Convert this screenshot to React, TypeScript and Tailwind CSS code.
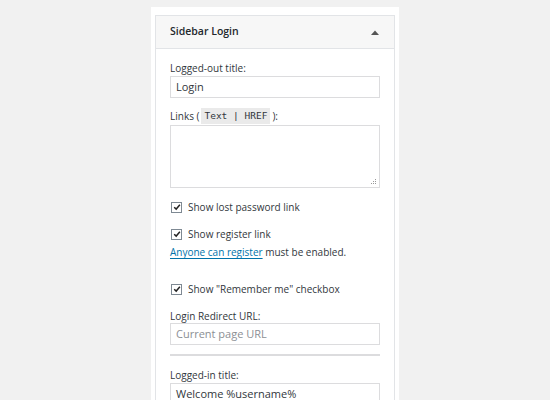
import React from "react";

function Check({ label }: { label: string }) {
  return (
    <label className="flex items-center h-[14px] leading-[14px]">
      <span className="ml-[1px] flex h-[11px] w-[11px] items-center justify-center border border-[#7e8993] bg-white">
        <svg viewBox="0 0 10 10" className="h-[8px] w-[8px]">
          <path d="M1.5 5.2 L4 7.6 L8.6 2.2" fill="none" stroke="#222" strokeWidth="1.8" />
        </svg>
      </span>
      <span className="ml-[6px]">{label}</span>
    </label>
  );
}

export default function App() {
  return (
    <div
      className="flex h-[400px] w-[550px] overflow-hidden bg-[#f1f1f1] pl-[151px] pt-[7px] text-[10px] text-[#32373c]"
      style={{ fontFamily: '"Open Sans", "Noto Sans", sans-serif' }}
    >
      <div className="h-[400px] w-[248px] bg-white pl-[4px] pt-[8px]">
        <div className="w-[240px] border border-[#e2e4e7] bg-white">
          <div className="flex h-[33px] items-center justify-between border-b border-[#e2e4e7] bg-[#f7f7f7] pl-[14px] pr-[15px]">
            <span className="text-[10.5px] font-semibold text-[#23282d]">Sidebar Login</span>
            <svg viewBox="0 0 8 5" className="h-[5px] w-[8px]">
              <path d="M0 5 L4 0.5 L8 5 Z" fill="#555" />
            </svg>
          </div>
          <div className="flex flex-col px-[14px] pt-[12px] pb-[20px]">
            <div className="h-[14px] leading-[14px]">Logged-out title:</div>
            <div className="mt-[1px] flex h-[22px] items-center border border-[#dcdcde] px-[5px] text-[11px] text-[#32373c]">
              Login
            </div>

            <div className="mt-[11px] flex h-[14px] items-center leading-[14px]">
              Links (
              <code
                className="mx-[2px] bg-[#eaeaea] px-[3px] py-[1px] text-[9.5px] leading-[14px]"
                style={{ fontFamily: '"DejaVu Sans Mono", monospace' }}
              >
                Text | HREF
              </code>
              ):
            </div>
            <div className="relative mt-[2px] h-[63px] border border-[#dcdcde]">
              <svg viewBox="0 0 6 6" className="absolute bottom-[2px] right-[2px] h-[6px] w-[6px]">
                <rect x="4" y="0" width="1" height="1" fill="#999" />
                <rect x="2" y="2" width="1" height="1" fill="#999" />
                <rect x="4" y="2" width="1" height="1" fill="#999" />
                <rect x="0" y="4" width="1" height="1" fill="#999" />
                <rect x="2" y="4" width="1" height="1" fill="#999" />
                <rect x="4" y="4" width="1" height="1" fill="#999" />
              </svg>
            </div>

            <div className="mt-[12px]">
              <Check label="Show lost password link" />
            </div>
            <div className="mt-[13px]">
              <Check label="Show register link" />
            </div>
            <div className="mt-[4px] h-[14px] leading-[14px]">
              <span className="text-[#0073aa] underline underline-offset-2">Anyone can register</span> must be
              enabled.
            </div>
            <div className="mt-[23px]">
              <Check label='Show "Remember me" checkbox' />
            </div>

            <div className="mt-[13px] h-[14px] leading-[14px]">Login Redirect URL:</div>
            <div className="mt-[0px] flex h-[22px] items-center border border-[#dcdcde] px-[5px] text-[11px] text-[#8c8f94]">
              Current page URL
            </div>
            <div className="mt-[9px] h-[2px] bg-[#dcdcde]" />

            <div className="mt-[12px] h-[14px] leading-[14px]">Logged-in title:</div>
            <div className="mt-[1px] flex h-[22px] items-center border border-[#dcdcde] px-[5px] text-[11px] text-[#32373c]">
              Welcome %username%
            </div>
          </div>
        </div>
      </div>
    </div>
  );
}
